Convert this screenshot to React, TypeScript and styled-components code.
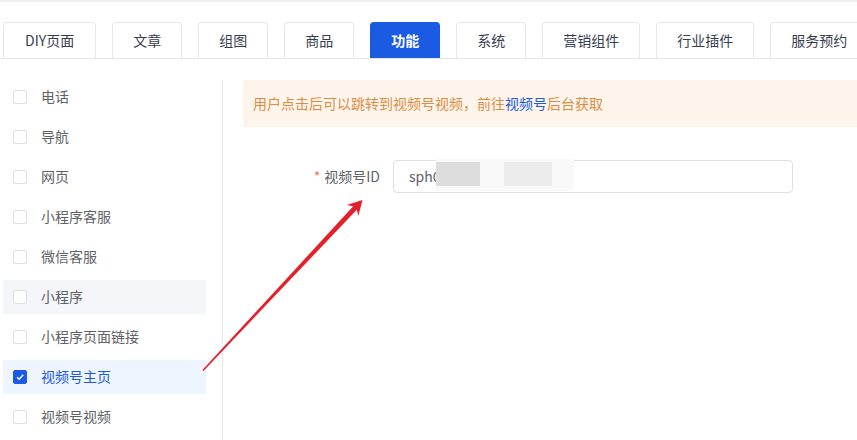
import React from "react";
import styled, { createGlobalStyle } from "styled-components";

const GlobalStyle = createGlobalStyle`
  html, body { margin: 0; padding: 0; background: #ffffff; }
  body {
    font-family: "Noto Sans CJK SC", "Noto Sans", "Liberation Sans", sans-serif;
    font-size: 14px;
    color: #606266;
  }
  * { box-sizing: border-box; }
`;

const Page = styled.div`
  position: relative;
  width: 857px;
  height: 440px;
  overflow: hidden;
  background: #fff;
`;

const TopStrip = styled.div`
  height: 2px;
  background: #edeef2;
`;

const TabBar = styled.div`
  display: flex;
  gap: 16px;
  padding: 20px 0 0 3px;
  border-bottom: 1px solid #e4e7ed;
  white-space: nowrap;
`;

const Tab = styled.div<{ $active?: boolean; $pad?: number }>`
  flex: none;
  height: 36px;
  padding: 0 ${(p) => p.$pad ?? 20}px 2px;
  display: flex;
  align-items: center;
  justify-content: center;
  border: 1px solid ${(p) => (p.$active ? "#1b5ae2" : "#e4e7ed")};
  border-bottom: none;
  border-radius: 4px 4px 0 0;
  background: ${(p) => (p.$active ? "#1b5ae2" : "#fff")};
  color: ${(p) => (p.$active ? "#fff" : "#363d4f")};
  font-weight: ${(p) => (p.$active ? 600 : 400)};
  font-size: 14px;
`;

const Main = styled.div`
  display: flex;
  padding-top: 21px;
  height: 381px;
`;

const Sidebar = styled.div`
  flex: none;
  width: 220px;
  margin-left: 3px;
  padding-right: 16px;
  border-right: 1px solid #e4e7ed;
  display: flex;
  flex-direction: column;
  gap: 6px;
`;

const Item = styled.div<{ $state?: "hover" | "active" }>`
  height: 34px;
  display: flex;
  align-items: center;
  gap: 14px;
  padding-left: 10px;
  background: ${(p) =>
    p.$state === "active" ? "#eef5fe" : p.$state === "hover" ? "#f5f6fa" : "transparent"};
  color: ${(p) => (p.$state === "active" ? "#1b5ae2" : "#606266")};
  font-size: 14px;
`;

const ItemText = styled.span`
  padding-bottom: 3px;
`;

const Box = styled.span<{ $checked?: boolean }>`
  flex: none;
  width: 14px;
  height: 14px;
  border-radius: 2px;
  border: 1px solid ${(p) => (p.$checked ? "#1b5ae2" : "#dcdfe6")};
  background: ${(p) => (p.$checked ? "#1b5ae2" : "#fff")};
  display: flex;
  align-items: center;
  justify-content: center;
`;

const Content = styled.div`
  flex: 1;
  padding-left: 20px;
`;

const Alert = styled.div`
  height: 47px;
  display: flex;
  align-items: center;
  padding: 0 10px 2px;
  background: #fdf5ec;
  color: #de8c44;
  font-size: 14px;
`;

const Link = styled.span`
  color: #1b5ae2;
`;

const FormRow = styled.div`
  display: flex;
  align-items: center;
  margin-top: 33px;
`;

const Label = styled.div`
  flex: none;
  width: 150px;
  padding: 0 13px 2px 0;
  text-align: right;
  color: #606266;
  font-size: 14px;
`;

const Star = styled.span`
  color: #f56c6c;
  margin-right: 4px;
`;

const InputBox = styled.div`
  position: relative;
  width: 400px;
  height: 33px;
  border: 1px solid #dcdfe6;
  border-radius: 4px;
  display: flex;
  align-items: center;
  padding: 0 0 2px 15px;
  color: #606266;
  font-size: 14px;
`;

const Mosaic = styled.div`
  position: absolute;
  left: 42px;
  top: -2px;
  width: 138px;
  height: 32px;
  background: #f9f9f9;
  display: flex;
  align-items: flex-start;
  padding-top: 3px;
`;

const Tile = styled.span<{ $w: number; $c: string; $ml?: number }>`
  width: ${(p) => p.$w}px;
  height: 24px;
  margin-left: ${(p) => p.$ml ?? 0}px;
  background: ${(p) => p.$c};
`;

const Arrow = styled.svg`
  position: absolute;
  left: 0;
  top: 0;
  pointer-events: none;
`;

const tabs = ["DIY页面", "文章", "组图", "商品", "功能", "系统", "营销组件", "行业插件", "服务预约"];
const items: { label: string; state?: "hover" | "active" }[] = [
  { label: "电话" },
  { label: "导航" },
  { label: "网页" },
  { label: "小程序客服" },
  { label: "微信客服" },
  { label: "小程序", state: "hover" },
  { label: "小程序页面链接" },
  { label: "视频号主页", state: "active" },
  { label: "视频号视频" },
];

export default function App() {
  return (
    <Page>
      <GlobalStyle />
      <TopStrip />
      <TabBar>
        {tabs.map((t) => (
          <Tab key={t} $active={t === "功能"} $pad={t === "DIY页面" ? 21 : 20}>
            {t}
          </Tab>
        ))}
      </TabBar>
      <Main>
        <Sidebar>
          {items.map((it) => (
            <Item key={it.label} $state={it.state}>
              <Box $checked={it.state === "active"}>
                {it.state === "active" && (
                  <svg width="10" height="10" viewBox="0 0 10 10">
                    <path d="M2 5.2 L4.2 7.2 L8.2 2.8" fill="none" stroke="#fff" strokeWidth="1.4" />
                  </svg>
                )}
              </Box>
              <ItemText>{it.label}</ItemText>
            </Item>
          ))}
        </Sidebar>
        <Content>
          <Alert>
            用户点击后可以跳转到视频号视频，前往<Link>视频号</Link>后台获取
          </Alert>
          <FormRow>
            <Label>
              <Star>*</Star>视频号ID
            </Label>
            <InputBox>
              sph0
              <Mosaic>
                <Tile $w={44} $c="#dddddd" />
                <Tile $w={48} $c="#ececec" $ml={24} />
              </Mosaic>
            </InputBox>
          </FormRow>
        </Content>
      </Main>
      <Arrow width="857" height="440" viewBox="0 0 857 440">
        <polygon
          points="362.5,200 358.3,216 356.8,209.7 203.5,371 202.4,370 353.2,206.3 346.7,205"
          fill="#e5202a"
        />
      </Arrow>
    </Page>
  );
}
